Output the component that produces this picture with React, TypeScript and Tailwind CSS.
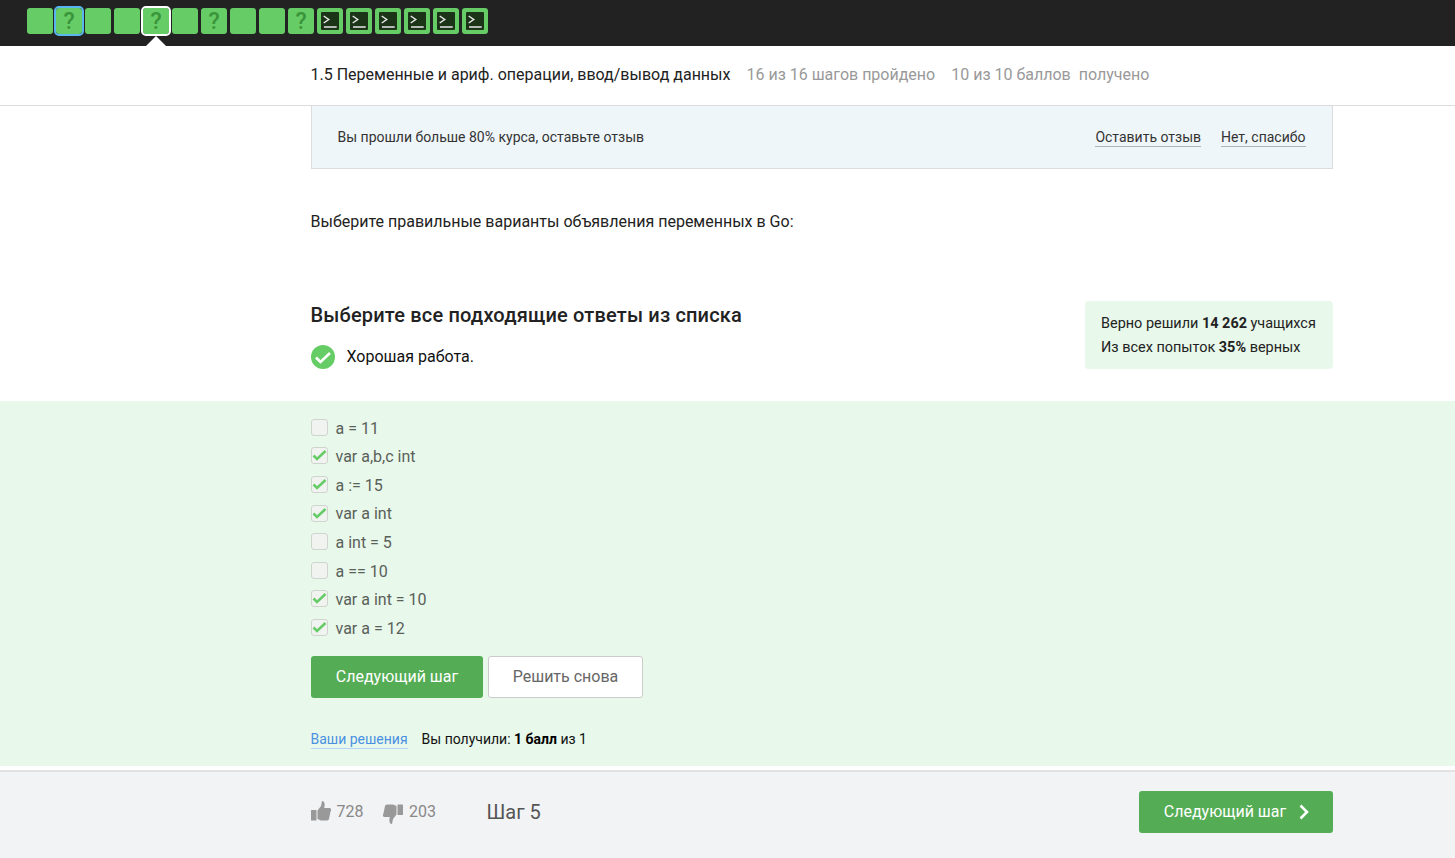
import React from "react";

const steps: ("g" | "q" | "c")[] = ["g","q","g","g","q","g","q","g","g","q","c","c","c","c","c","c"];

function Step({ kind, index }: { kind: "g" | "q" | "c"; index: number }) {
  const ring = index === 1 ? "outline-2 outline-[#59b7f0]" : index === 4 ? "outline-2 outline-white" : "";
  return (
    <div className={`relative w-[26px] h-[26px] rounded-[3px] bg-[#66cc66] flex items-center justify-center ${ring}`}>
      {kind === "q" && <span className="text-[23px] leading-none font-medium text-[#3a943a]">?</span>}
      {kind === "c" && (
        <div className="w-[18px] h-[18px] rounded-[1px] bg-[#1b3317]">
          <svg width="18" height="18" viewBox="0 0 18 18" fill="none" stroke="#e8e8e8" strokeWidth="1.5">
            <path d="M2.7 4l5 3.5-5 3.5" />
            <path d="M3 15h12.7" />
          </svg>
        </div>
      )}
      {index === 4 && <div className="absolute left-[3px] top-[28px] w-0 h-0 border-l-[10px] border-r-[10px] border-b-[10px] border-l-transparent border-r-transparent border-b-white" />}
    </div>
  );
}

function Option({ label, checked }: { label: string; checked: boolean }) {
  return (
    <div className="h-[28.6px] flex items-center gap-[7.5px]">
      <div className="w-[17px] h-[17px] rounded-[3px] border border-[#cfd4cf] bg-[#f1f3f1] flex items-center justify-center">
        {checked && (
          <svg width="15" height="13" viewBox="0 0 15 13" fill="none" stroke="#66cc66" strokeWidth="2.5">
            <path d="M1.5 6.5l3.5 3.5L13.5 2" />
          </svg>
        )}
      </div>
      <span className="text-[16px] text-[#5a5f5a] leading-[19px] pt-[1.7px]">{label}</span>
    </div>
  );
}

function Thumb({ className }: { className: string }) {
  return (
    <svg width="20" height="20" viewBox="0 0 20 20" fill="#999999" className={className}>
      <rect x="0" y="9" width="5.5" height="10.5" rx="0.5" />
      <path d="M6.5 9.5L10 5 11 0C13.5 0 14.2 3 13.2 7H18.5C20.5 7 20.5 9.5 19.5 10.5L18 18C17.5 19 16.5 19.5 15.5 19.5H10L6.5 18Z" />
    </svg>
  );
}

export default function App() {
  return (
    <div className="w-[1455px] h-[858px] overflow-hidden bg-white font-['Roboto',sans-serif] text-[#222]">
      <div className="h-[46px] bg-[#222222] pl-[27px] pt-[8px] flex gap-[3px] items-start">
        {steps.map((s, i) => <Step key={i} kind={s} index={i} />)}
      </div>

      <div className="h-[60px] border-b border-[#dcdcdc] pl-[310.5px] pb-[2px] flex items-center text-[16px]">
        <span className="text-[#222]">1.5 Переменные и ариф. операции, ввод/вывод данных</span>
        <span className="ml-[16px] text-[#999]">16 из 16 шагов пройдено</span>
        <span className="ml-[16px] text-[#999]">10 из 10 баллов&nbsp; получено</span>
      </div>

      <div className="ml-[311px] w-[1022px] h-[63px] bg-[#eff6fa] border-x border-b border-[#d9dde0] flex items-center justify-between pl-[25.5px] pr-[26.5px] text-[14px] text-[#333]">
        <span>Вы прошли больше 80% курса, оставьте отзыв</span>
        <div className="flex gap-[20px] pt-[1px]">
          <span className="border-b border-[#aeb4b8] leading-[17px]">Оставить отзыв</span>
          <span className="border-b border-[#aeb4b8] leading-[17px]">Нет, спасибо</span>
        </div>
      </div>

      <div className="pl-[310.5px] pt-[43px] text-[16px] leading-[19px] text-[#222]">
        Выберите правильные варианты объявления переменных в Go:
      </div>

      <div className="pl-[310.5px] pr-[122px] pt-[70px] h-[170px] flex justify-between items-start">
        <div>
          <div className="text-[20px] font-medium leading-[28px] tracking-[0.17px] text-[#222]">Выберите все подходящие ответы из списка</div>
          <div className="flex items-center gap-[11.5px] mt-[16px] pl-[0.5px]">
            <div className="w-[24px] h-[24px] rounded-full bg-[#66cc66] flex items-center justify-center">
              <svg width="18" height="15" viewBox="0 0 18 15" fill="none" stroke="white" strokeWidth="2.6">
                <path d="M2 7.5l4.5 4.5L16 3" />
              </svg>
            </div>
            <span className="text-[16px] text-[#111]">Хорошая работа.</span>
          </div>
        </div>
        <div className="w-[248px] h-[68px] rounded-[4px] bg-[#e8f8ea] px-[16px] pt-[11px] text-[14.45px] leading-[24px] text-[#222]">
          <div>Верно решили <b className="font-bold">14 262</b> учащихся</div>
          <div>Из всех попыток <b className="font-bold">35%</b> верных</div>
        </div>
      </div>

      <div className="h-[365px] bg-[#e8f8ea] pl-[311px] pt-[12px]">
        <Option label="a = 11" checked={false} />
        <Option label="var a,b,c int" checked />
        <Option label="a := 15" checked />
        <Option label="var a int" checked />
        <Option label="a int = 5" checked={false} />
        <Option label="a == 10" checked={false} />
        <Option label="var a int = 10" checked />
        <Option label="var a = 12" checked />
        <div className="flex gap-[5px] mt-[14px]">
          <div className="w-[172px] h-[42px] rounded-[3px] bg-[#54ad54] text-white text-[16px] flex items-center justify-center">Следующий шаг</div>
          <div className="w-[155px] h-[42px] rounded-[3px] bg-white border border-[#cccccc] text-[#666] text-[16px] flex items-center justify-center">Решить снова</div>
        </div>
        <div className="mt-[31px] -ml-[0.5px] flex items-center gap-[14px] text-[14px] leading-[20px]">
          <span className="text-[#4a90e2] border-b border-[#b5d6f5] leading-[17px] pt-[2px]">Ваши решения</span>
          <span className="text-[#111]">Вы получили: <b className="font-bold text-black">1 балл</b> из 1</span>
        </div>
      </div>

      <div className="h-[4px]" />
      <div className="h-[88px] bg-[#f2f3f5] border-t-2 border-[#e2e2e2] pl-[311px] pr-[122px] pt-[19px] flex items-start justify-between">
        <div className="h-[42px] flex items-center text-[#888]">
          <Thumb className="-mt-[2px]" />
          <span className="ml-[5.5px] text-[16px] w-[40px]">728</span>
          <Thumb className="ml-[6.5px] mt-[3px] rotate-180" />
          <span className="ml-[6px] text-[16px]">203</span>
          <span className="ml-[50.5px] text-[20px] text-[#555]">Шаг 5</span>
        </div>
        <div className="w-[194px] h-[42px] rounded-[3px] bg-[#54ad54] text-white text-[16px] flex items-center justify-center gap-[12px] pl-[2px]">
          Следующий шаг
          <svg width="12" height="16" viewBox="0 0 12 16" fill="none" stroke="white" strokeWidth="2.6">
            <path d="M2.5 1.5L9 8l-6.5 6.5" />
          </svg>
        </div>
      </div>
    </div>
  );
}
